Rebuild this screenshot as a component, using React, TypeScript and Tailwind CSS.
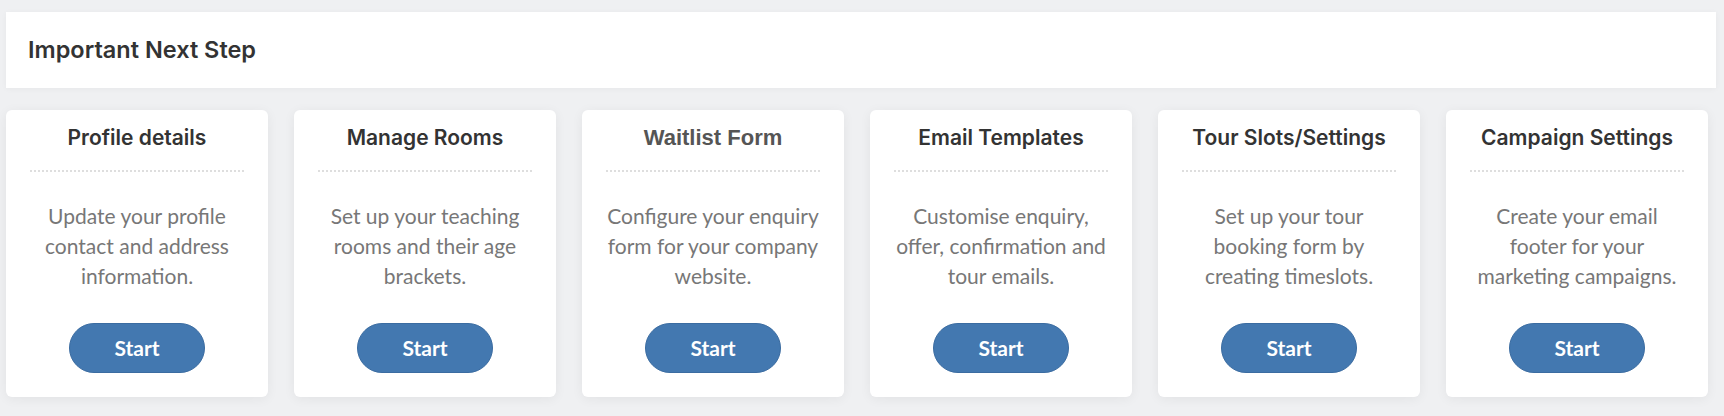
import React from "react";

type Step = {
  title: string;
  body: string;
  legacy?: boolean;
};

const steps: Step[] = [
  { title: "Profile details", body: "Update your profile contact and address information." },
  { title: "Manage Rooms", body: "Set up your teaching rooms and their age brackets." },
  { title: "Waitlist Form", body: "Configure your enquiry form for your company website.", legacy: true },
  { title: "Email Templates", body: "Customise enquiry, offer, confirmation and tour emails." },
  { title: "Tour Slots/Settings", body: "Set up your tour booking form by creating timeslots." },
  { title: "Campaign Settings", body: "Create your email footer for your marketing campaigns." },
];

function StepCard({ step }: { step: Step }) {
  return (
    <div className="w-[262px] h-[287px] shrink-0 bg-white rounded-md shadow-[0_2px_12px_rgba(0,0,0,0.06)] flex flex-col items-center text-center pt-[14px] px-6 pb-6">
      {step.legacy ? (
        <h3 className="font-['Liberation_Sans',Arial,sans-serif] font-bold text-[22px] leading-[28px] text-[#555]">
          {step.title}
        </h3>
      ) : (
        <h3 className="font-['Inter',sans-serif] font-semibold text-[21px] leading-[28px] text-[#333]">
          {step.title}
        </h3>
      )}
      <div className="mt-[18px] w-full border-t-2 border-dotted border-[#dedede]" />
      <p className="mt-[29px] font-['Lato',sans-serif] text-[21px] leading-[30px] text-[#777]">
        {step.body}
      </p>
      <button className="mt-auto w-[136px] h-[50px] rounded-full bg-[#4378b0] border border-[#3b6ca1] text-white font-['Lato',sans-serif] font-bold text-[21px]">
        Start
      </button>
    </div>
  );
}

export default function App() {
  return (
    <main className="min-h-screen bg-[#eff0f2] pt-3 pl-[6px] pr-2 pb-4">
      <header className="h-[76px] bg-white flex items-center pl-[22px] shadow-[0_1px_6px_rgba(0,0,0,0.04)]">
        <h2 className="font-['Inter',sans-serif] font-semibold text-[23.5px] text-[#333]">
          Important Next Step
        </h2>
      </header>

      <div className="mt-[22px] flex gap-[26px]">
        {steps.map((s) => (
          <StepCard key={s.title} step={s} />
        ))}
      </div>
    </main>
  );
}
